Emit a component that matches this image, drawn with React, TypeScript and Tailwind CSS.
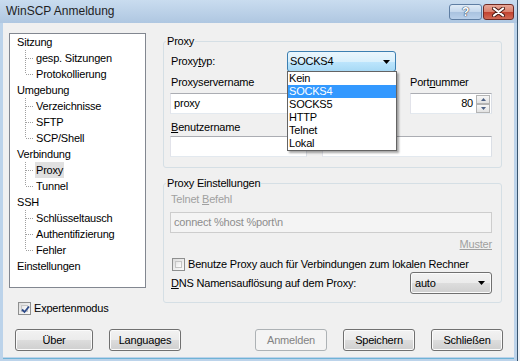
import React from "react";

const tree: { t: string; c: string[] }[] = [
  { t: "Sitzung", c: ["gesp. Sitzungen", "Protokollierung"] },
  { t: "Umgebung", c: ["Verzeichnisse", "SFTP", "SCP/Shell"] },
  { t: "Verbindung", c: ["Proxy", "Tunnel"] },
  { t: "SSH", c: ["Schlüsseltausch", "Authentifizierung", "Fehler"] },
  { t: "Einstellungen", c: [] },
];

function Connector({ last }: { last: boolean }) {
  return (
    <svg width="18" height="16" className="shrink-0">
      <line x1="8.5" y1="0" x2="8.5" y2={last ? 8 : 16} stroke="#a0a0a0" strokeDasharray="1 1" />
      <line x1="9" y1="8.5" x2="16" y2="8.5" stroke="#a0a0a0" strokeDasharray="1 1" />
    </svg>
  );
}

function Tree() {
  return (
    <div className="w-[137px] h-[255px] bg-white border border-[#828790] pt-[0px] pl-[7px]">
      {tree.map((n) => (
        <div key={n.t}>
          <div className="h-[16px] flex items-center leading-[16px]">{n.t}</div>
          {n.c.map((c, i) => (
            <div key={c} className="h-[16px] flex items-center">
              <Connector last={i === n.c.length - 1} />
              <span
                className={
                  "leading-[16px] px-[1px] " + (c === "Proxy" ? "bg-[#e0e0e0]" : "")
                }
              >
                {c}
              </span>
            </div>
          ))}
        </div>
      ))}
    </div>
  );
}

function CheckBox({ checked }: { checked: boolean }) {
  return (
    <div className="w-[13px] h-[13px] border border-[#8e8f8f] bg-[linear-gradient(135deg,#dcdcdc,#fcfcfc)] p-[2px] shrink-0">
      <div className="w-full h-full border border-[#c5c5c5] bg-[linear-gradient(135deg,#e6e6e6,#ffffff)] relative">
        {checked && (
          <svg width="11" height="11" viewBox="0 0 11 11" className="absolute -left-[2px] -top-[2px]">
            <path d="M2 5.5 L4.5 8 L9 2.5" stroke="#2d4a8a" strokeWidth="1.8" fill="none" />
          </svg>
        )}
      </div>
    </div>
  );
}

function Arrow() {
  return (
    <svg width="7" height="4" viewBox="0 0 7 4">
      <path d="M0 0 H7 L3.5 4 Z" fill="#000" />
    </svg>
  );
}

function Btn({ label, w, disabled }: { label: React.ReactNode; w: string; disabled?: boolean }) {
  return (
    <div
      className={
        "h-[22px] rounded-[3px] border flex items-center justify-center " +
        w +
        (disabled
          ? " border-[#adb2b5] bg-[#f4f4f4] text-[#838383]"
          : " border-[#707070] bg-[linear-gradient(#f2f2f2_0%,#ebebeb_50%,#dddddd_50%,#cfcfcf_100%)] shadow-[inset_0_0_0_1px_#fbfbfb]")
      }
    >
      {label}
    </div>
  );
}

function Input({ w, children, disabled, className }: { w: string; children?: React.ReactNode; disabled?: boolean; className?: string }) {
  return (
    <div
      className={
        "h-[21px] border flex items-center pl-[3px] " +
        w +
        (disabled ? " border-[#cdcdcd] bg-[#f4f4f4] text-[#8d8d8d]" : " border-[#abadb3] border-l-[#e2e3ea] border-b-[#e3e9ef] border-r-[#dbdfe6] bg-white") +
        " " +
        (className || "")
      }
    >
      {children}
    </div>
  );
}

function SpinHalf({ up }: { up: boolean }) {
  return (
    <div className="w-[14px] h-[9px] border border-[#b4b4b4] bg-[linear-gradient(#f7f7f7,#e2e2e2)] flex items-center justify-center">
      <svg width="5" height="3" viewBox="0 0 5 3">
        <path d={up ? "M0 3 H5 L2.5 0 Z" : "M0 0 H5 L2.5 3 Z"} fill="#4d6185" />
      </svg>
    </div>
  );
}

export default function App() {
  return (
    <div className="w-[520px] h-[361px] overflow-hidden bg-[#eef2f6] font-['Liberation_Sans',Arial,sans-serif] text-[11px] tracking-[-0.2px] text-black">
      <div className="w-[518px] h-[361px] flex flex-col bg-[#bcd3ea] border-r border-[#3a5670]">
        {/* Title bar */}
        <div className="h-[23px] shrink-0 flex items-start bg-[linear-gradient(#c9dcef,#afc7e1)] pl-[6px] pr-[3px]">
          <span className="text-[12px] tracking-normal leading-[23px] text-[#1e1e1e]">WinSCP Anmeldung</span>
          <div className="ml-auto flex gap-[1px] mt-[4px]">
            <div className="w-[33px] h-[16px] rounded-[3px] border border-[#5f7ea3] bg-[linear-gradient(#e0ebf6_0%,#c4d7ec_50%,#a9c2df_50%,#b9d0ea_100%)] flex items-center justify-center">
              <span className="text-[12px] font-bold leading-[14px] text-white [text-shadow:0_0_1px_#3a4a66,0_0_1px_#3a4a66,0_0_1px_#3a4a66]">?</span>
            </div>
            <div className="w-[31px] h-[16px] rounded-[3px] border border-[#6e2a24] bg-[linear-gradient(#e8a798_0%,#d9806d_50%,#c1402e_50%,#d16a55_100%)] flex items-center justify-center">
              <svg width="13" height="10" viewBox="0 0 13 10">
                <path d="M2 1.5 L11 8.5 M11 1.5 L2 8.5" stroke="#4a1a14" strokeWidth="4" strokeLinecap="round" />
                <path d="M2 1.5 L11 8.5 M11 1.5 L2 8.5" stroke="#ffffff" strokeWidth="2.2" strokeLinecap="round" />
              </svg>
            </div>
          </div>
        </div>

        {/* Client */}
        <div className="flex-1 ml-[3px] mr-[3px] mb-[4px] bg-[#f0f0f0] flex flex-col">
          <div className="flex pt-[10px] pl-[6px]">
            <div className="flex flex-col w-[137px]">
              <Tree />
              <div className="flex items-center mt-[14px] ml-[9px] h-[13px]">
                <CheckBox checked />
                <span className="ml-[3px] leading-[15px]">Expertenmodus</span>
              </div>
            </div>

            <div className="ml-[17px] pt-[1px] flex flex-col w-[339px]">
              {/* Proxy group */}
              <fieldset className="border border-[#d5dfe5] rounded-[3px]">
                <legend className="ml-[2px] px-[1px] leading-[15px]">Proxy</legend>
                <div className="pl-[6px] pr-[9px] pb-[10px]">
                  <div className="mt-[2px] flex items-center h-[21px]">
                    <span className="w-[117px] pl-[1px]">
                      Proxy<span className="underline">t</span>yp:
                    </span>
                    <div className="relative w-[109px] h-[21px]">
                      <div className="w-full h-full rounded-[3px] border border-[#3c7fb1] bg-[linear-gradient(#eaf6fd_0%,#d9f0fc_50%,#bee6fd_50%,#a7d9f5_100%)] flex items-center pl-[2px] pr-[5px]">
                        <span className="flex-1">SOCKS4</span>
                        <Arrow />
                      </div>
                      <div className="absolute left-0 top-[20px] w-[110px] h-[80px] bg-white border border-[#646464] shadow-[2px_2px_2px_rgba(0,0,0,0.35)] z-10">
                        {["Kein", "SOCKS4", "SOCKS5", "HTTP", "Telnet", "Lokal"].map((o) => (
                          <div
                            key={o}
                            className={
                              "h-[13px] leading-[13px] pl-[1px] " +
                              (o === "SOCKS4" ? "bg-[#3399ff] text-white" : "")
                            }
                          >
                            {o}
                          </div>
                        ))}
                      </div>
                    </div>
                  </div>

                  <div className="flex mt-[3px]">
                    <div className="w-[226px] flex flex-col">
                      <span className="pl-[1px] leading-[15px]">Proxyservername</span>
                      <Input w="w-[226px]" className="mt-[3px]">proxy</Input>
                    </div>
                    <div className="ml-[14px] w-[82px] flex flex-col">
                      <span className="leading-[15px]">
                        Port<span className="underline">n</span>ummer
                      </span>
                      <Input w="w-[82px]" className="mt-[3px] pr-[1px]">
                        <span className="flex-1 text-right pr-[3px]">80</span>
                        <div className="flex flex-col">
                          <SpinHalf up />
                          <SpinHalf up={false} />
                        </div>
                      </Input>
                    </div>
                  </div>

                  <div className="flex mt-[6px]">
                    <div className="w-[137px] flex flex-col">
                      <span className="pl-[1px] leading-[15px]">
                        <span className="underline">B</span>enutzername
                      </span>
                      <Input w="w-[137px]" className="mt-[1px]" />
                    </div>
                    <div className="ml-[15px] w-[170px] flex flex-col">
                      <span className="leading-[15px]">Passwort</span>
                      <Input w="w-[170px]" className="mt-[1px]" />
                    </div>
                  </div>
                </div>
              </fieldset>

              {/* Proxy Einstellungen */}
              <fieldset className="mt-[8px] border border-[#d5dfe5] rounded-[3px]">
                <legend className="ml-[2px] px-[1px] leading-[15px]">Proxy Einstellungen</legend>
                <div className="pl-[6px] pr-[9px] pb-[8px] flex flex-col">
                  <span className="mt-[1px] pl-[1px] leading-[15px] text-[#a0a0a0]">
                    Telnet <span className="underline">B</span>efehl
                  </span>
                  <Input w="w-[322px]" disabled className="mt-[5px] h-[20px]">
                    connect %host %port\n
                  </Input>
                  <div className="mt-[4px] h-[15px] flex justify-end">
                    <span className="leading-[15px] text-[#a0a0a0] underline">Muster</span>
                  </div>
                  <div className="mt-[5px] h-[15px] flex items-center pl-[2px]">
                    <CheckBox checked={false} />
                    <span className="ml-[3px] leading-[15px]">
                      Benutze Proxy auch für Verbindungen zum lokalen Rechner
                    </span>
                  </div>
                  <div className="flex items-center h-[22px]">
                    <span className="w-[240px] pl-[1px]">
                      <span className="underline">D</span>NS Namensauflösung auf dem Proxy:
                    </span>
                    <div className="w-[82px] h-[22px] rounded-[3px] border border-[#707070] bg-[linear-gradient(#f2f2f2_0%,#ebebeb_50%,#dddddd_50%,#cfcfcf_100%)] shadow-[inset_0_0_0_1px_#fbfbfb] flex items-center pl-[4px] pr-[6px]">
                      <span className="flex-1">auto</span>
                      <Arrow />
                    </div>
                  </div>
                </div>
              </fieldset>
            </div>
          </div>

          {/* Buttons */}
          <div className="flex mt-[14px] ml-[12px]">
            <Btn label="Über" w="w-[78px]" />
            <Btn label="Languages" w="w-[72px] ml-[16px]" />
            <Btn label="Anmelden" w="w-[72px] ml-[74px]" disabled />
            <Btn label="Speichern" w="w-[72px] ml-[16px]" />
            <Btn label="Schließen" w="w-[72px] ml-[16px]" />
          </div>
        </div>
        <div className="h-[1px] bg-[#6fb3d6] -mt-[3px] mb-[2px] mx-[3px]" />
      </div>
    </div>
  );
}
